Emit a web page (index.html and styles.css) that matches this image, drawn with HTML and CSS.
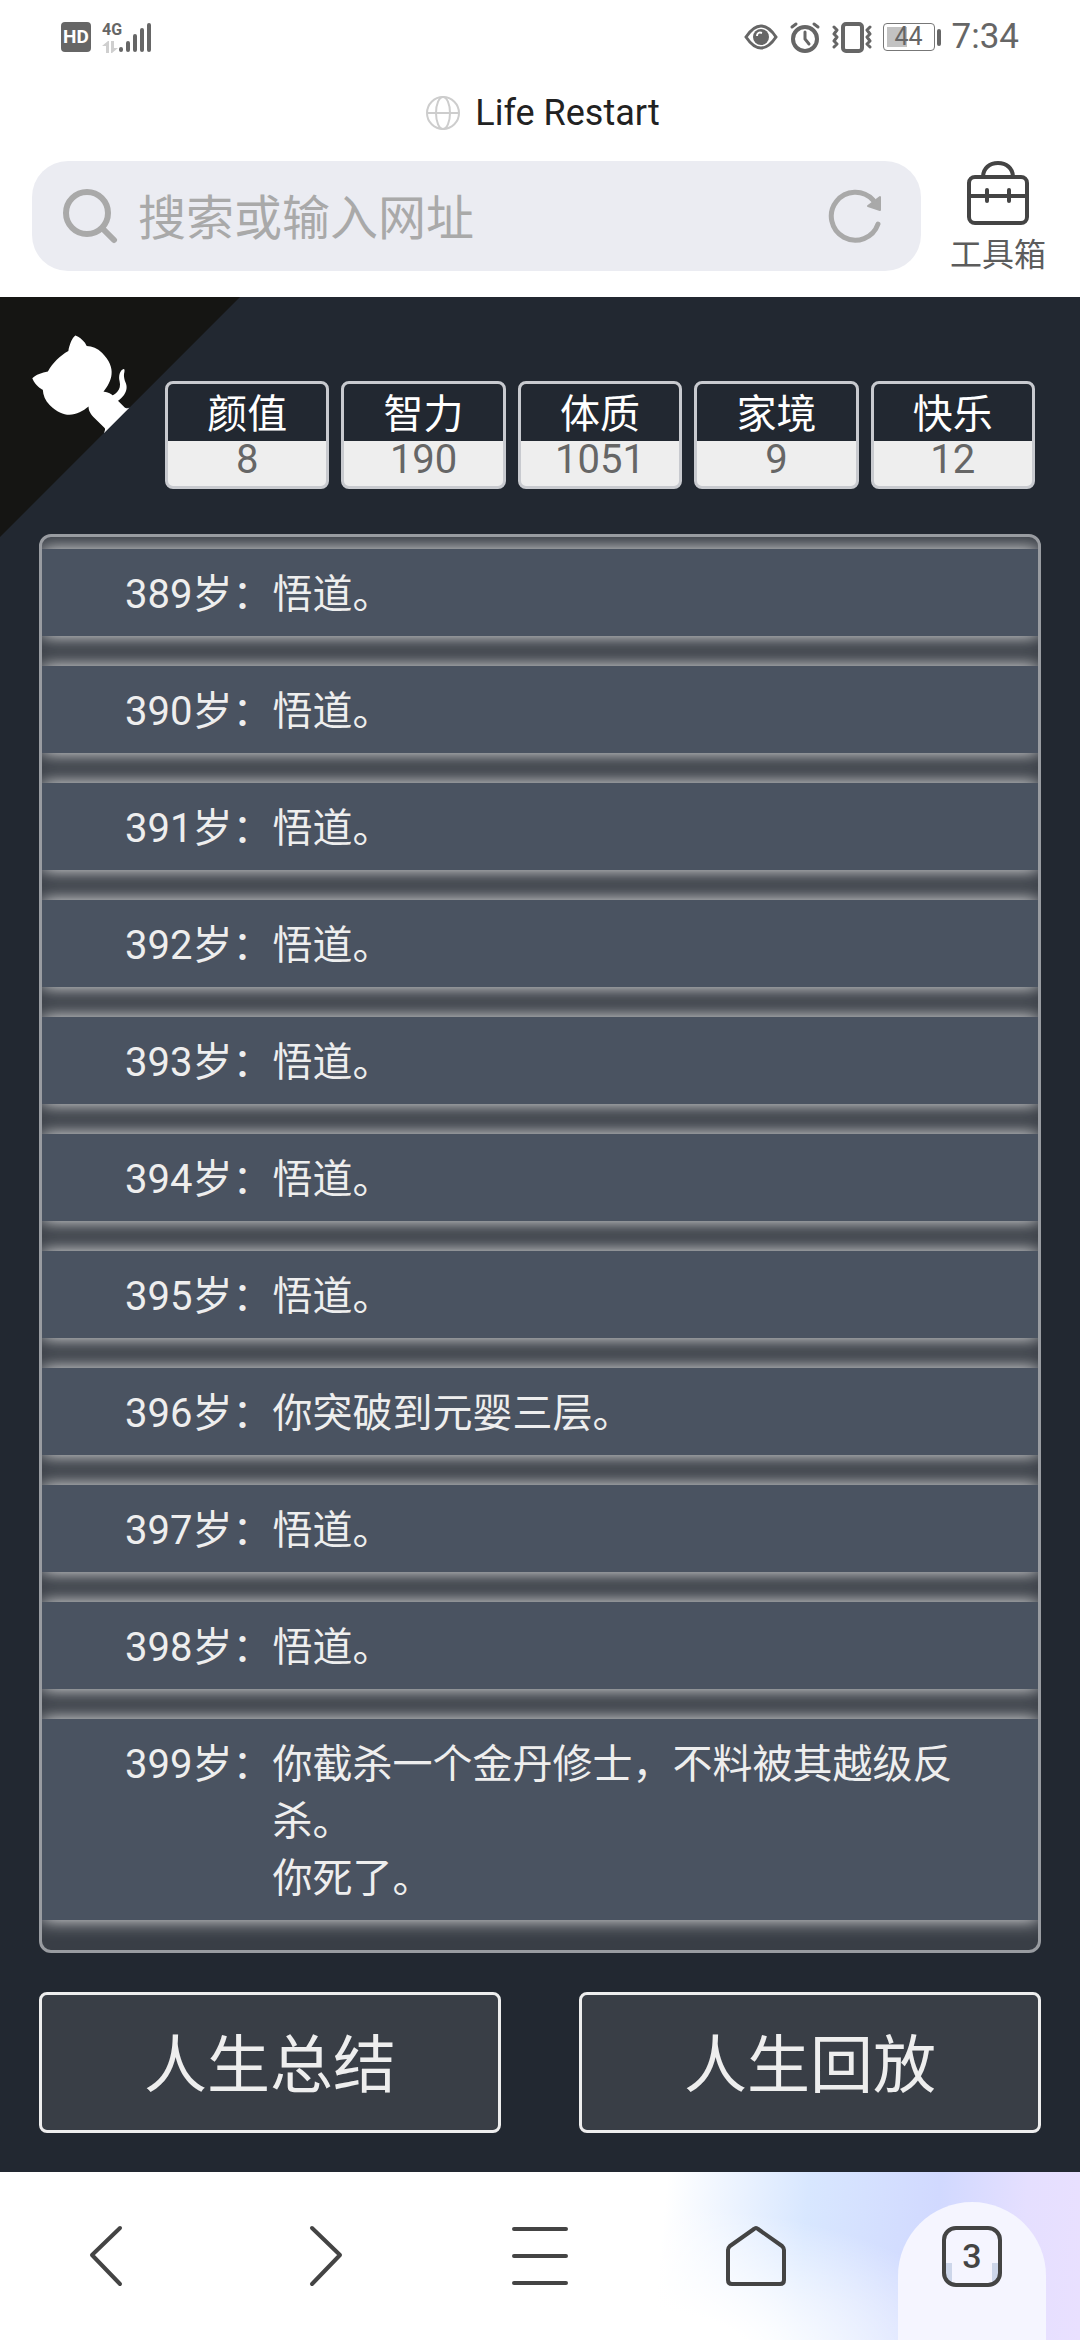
FILE: index.html
```
<!DOCTYPE html>
<html lang="zh-CN">
<head>
  <meta charset="utf-8">
  <meta name="viewport" content="width=device-width, initial-scale=1">
  <title>Life Restart</title>
  <link rel="stylesheet" href="styles.css">
</head>
<body>
  <!-- browser header -->
  <header class="browser-top">
    <div class="status-bar">
      <div class="status-group">
        <span class="hd">HD</span>
        <span class="network">
          <span class="network-type">4G</span>
          <svg width="16" height="12" viewBox="0 0 16 12" fill="#cfcfcf"><path d="M0 5 L6 0 H7 V12 H4 V5Z M9 0 H12 V7 H16 L10 12 H9Z"/></svg>
        </span>
        <svg width="34" height="32" viewBox="0 0 34 32" stroke="#666" stroke-width="4" stroke-linecap="round"><path d="M3 28V29M10 22V29M17 15V29M24 9V29M31 4V29"/></svg>
      </div>
      <div class="status-group status-right">
        <svg width="34" height="32" viewBox="0 0 34 32" fill="none" stroke="#666" stroke-width="3"><path d="M2 16C8 7 13 5 17 5S26 7 32 16C26 25 21 27 17 27S8 25 2 16Z"/><circle cx="17" cy="16" r="8" fill="#666" stroke="none"/><path d="M13 15C13 12 15 11 18 12" stroke="#fff" stroke-width="2"/></svg>
        <svg width="32" height="32" viewBox="0 0 32 32" fill="none" stroke="#666" stroke-width="4" stroke-linecap="round"><circle cx="16" cy="18" r="12"/><path d="M16 11V18L20 23M3 6L7 3M29 6L25 3" stroke-width="3"/></svg>
        <svg width="40" height="32" viewBox="0 0 40 32" fill="none" stroke="#666" stroke-width="3" stroke-linecap="round" stroke-linejoin="round"><rect x="11" y="3" width="19" height="27" rx="3" stroke-width="4"/><path d="M2 6L5 9L2 13L5 16L2 20L5 23L2 26M38 6L35 9L38 13L35 16L38 20L35 23L38 26"/></svg>
        <span class="battery">
          <span class="battery-body"><span class="battery-level">44</span></span>
          <span class="battery-cap"></span>
        </span>
        <span class="clock">7:34</span>
      </div>
    </div>

    <div class="page-title">
      <svg width="34" height="34" viewBox="0 0 34 34" fill="none" stroke="#cdcdcd" stroke-width="2"><circle cx="17" cy="17" r="16"/><ellipse cx="17" cy="17" rx="7" ry="16"/><path d="M1 17H33"/></svg>
      <span>Life Restart</span>
    </div>

    <div class="address-row">
      <form class="search">
        <svg width="56" height="56" viewBox="0 0 56 56" fill="none" stroke="#a9a9a9" stroke-width="6" stroke-linecap="round"><circle cx="25" cy="25" r="21"/><path d="M41 41L52 52"/></svg>
        <input type="text" class="search-input" placeholder="搜索或输入网址" aria-label="搜索或输入网址">
        <button type="button" class="icon-btn" aria-label="刷新">
          <svg width="56" height="56" viewBox="0 0 56 56" fill="none" stroke="#a9a9a9" stroke-width="5" stroke-linecap="round"><path d="M51 36A24 24 0 1 1 46 12"/><path d="M53 9V22L41 18Z" fill="#a9a9a9" stroke-width="2" stroke-linejoin="round"/></svg>
        </button>
      </form>
      <button type="button" class="toolbox">
        <svg width="64" height="64" viewBox="0 0 64 64" fill="none" stroke="#444" stroke-width="4" stroke-linecap="round"><rect x="3" y="16" width="58" height="46" rx="6"/><path d="M17 16C17 7 24 2 32 2S47 7 47 16M3 35H61M21 29V40M43 29V40"/></svg>
        <span>工具箱</span>
      </button>
    </div>
  </header>

  <!-- game -->
  <main class="game">
    <a href="#" class="github-corner" aria-label="View source on GitHub">
      <svg width="240" height="240" viewBox="0 0 250 250">
        <g transform="translate(250 0) scale(-1 1)">
          <path fill="#151513" d="M0,0 L115,115 L130,115 L142,142 L250,250 L250,0 Z"/>
          <path fill="#fff" d="M128.3,109.0 C113.8,99.7 119.0,89.6 119.0,89.6 C122.0,82.7 120.5,78.6 120.5,78.6 C119.2,72.0 123.4,76.3 123.4,76.3 C127.3,80.9 125.5,87.3 125.5,87.3 C122.9,97.6 130.6,101.9 134.4,103.2"/>
          <path fill="#fff" d="M115.0,115.0 C114.9,115.1 118.7,116.5 119.8,115.4 L133.7,101.6 C136.9,99.2 139.9,98.4 142.2,98.6 C133.8,88.0 127.5,74.4 143.8,58.0 C148.5,53.4 154.0,51.2 159.7,51.0 C160.3,49.4 163.2,43.6 171.4,40.1 C171.4,40.1 176.1,42.5 178.8,56.2 C183.1,58.6 187.2,61.8 190.9,65.4 C194.5,69.0 197.7,73.2 200.1,77.6 C213.8,80.2 216.3,84.9 216.3,84.9 C212.7,93.1 206.9,96.0 205.4,96.6 C205.1,102.4 203.0,107.8 198.3,112.5 C181.9,128.9 168.3,122.5 157.7,114.1 C157.9,116.9 156.7,120.9 152.7,124.9 L141.0,136.5 C139.8,137.7 141.6,141.9 141.8,141.8 Z"/>
        </g>
      </svg>
    </a>

    <ul class="property">
      <li><span>颜值</span><span class="value">8</span></li>
      <li><span>智力</span><span class="value">190</span></li>
      <li><span>体质</span><span class="value">1051</span></li>
      <li><span>家境</span><span class="value">9</span></li>
      <li><span>快乐</span><span class="value">12</span></li>
    </ul>

    <ul class="trajectory">
      <li><span>389岁：</span><span>悟道。</span></li>
      <li><span>390岁：</span><span>悟道。</span></li>
      <li><span>391岁：</span><span>悟道。</span></li>
      <li><span>392岁：</span><span>悟道。</span></li>
      <li><span>393岁：</span><span>悟道。</span></li>
      <li><span>394岁：</span><span>悟道。</span></li>
      <li><span>395岁：</span><span>悟道。</span></li>
      <li><span>396岁：</span><span>你突破到元婴三层。</span></li>
      <li><span>397岁：</span><span>悟道。</span></li>
      <li><span>398岁：</span><span>悟道。</span></li>
      <li><span>399岁：</span><span>你截杀一个金丹修士，不料被其越级反杀。<br>你死了。</span></li>
    </ul>

    <div class="btn-area">
      <button type="button" class="mainbtn">人生总结</button>
      <button type="button" class="mainbtn">人生回放</button>
    </div>
  </main>

  <!-- browser toolbar -->
  <nav class="toolbar">
    <button type="button" aria-label="后退"><svg width="64" height="64" viewBox="0 0 64 64"><path d="M44 4L16 31L44 60"/></svg></button>
    <button type="button" aria-label="前进"><svg width="64" height="64" viewBox="0 0 64 64"><path d="M20 4L48 31L20 60"/></svg></button>
    <button type="button" aria-label="菜单"><svg width="64" height="64" viewBox="0 0 64 64"><path d="M6 5H58M6 32H58M6 59H58"/></svg></button>
    <button type="button" aria-label="主页"><svg width="64" height="64" viewBox="0 0 64 64"><path d="M30 5Q32 3 34 5L58 22Q60 24 60 26V56Q60 60 56 60H8Q4 60 4 56V26Q4 24 6 22Z"/></svg></button>
    <button type="button" class="tabs"><span class="tabs-bg"><span class="tabs-count">3</span></span></button>
  </nav>
</body>
</html>
```
FILE: styles.css
```
* {
  box-sizing: border-box;
}

body {
  margin: 0;
  background-color: #fff;
  font-family: Roboto, "Noto Sans CJK SC", sans-serif;
}

ul {
  list-style-type: none;
  margin: 0;
  padding: 0;
}

button {
  margin: 0;
  padding: 0;
  border: none;
  background: none;
  font-family: inherit;
}

svg {
  display: block;
  flex: none;
}

/* browser header */
.browser-top {
  padding: 21px 32px 23px;
}

.status-bar {
  display: flex;
  justify-content: space-between;
  height: 32px;
  padding: 0 29px;
  color: #666;
}

.status-group {
  display: flex;
  align-items: center;
}

.status-right {
  gap: 11px;
}

.hd {
  width: 30px;
  margin-right: 11px;
  border-radius: 4px;
  background-color: #666;
  color: #fff;
  font-size: 19px;
  font-weight: bold;
  line-height: 30px;
  text-align: center;
}

.network {
  display: flex;
  flex-direction: column;
  align-items: flex-start;
  width: 16px;
  gap: 3px;
}

.network-type {
  font-size: 16px;
  font-weight: bold;
  line-height: 16px;
}

.battery {
  display: flex;
  align-items: center;
  gap: 2px;
}

.battery-body {
  width: 52px;
  height: 28px;
  padding: 3px;
  border: 1px solid #777;
  border-radius: 4px;
}

.battery-level {
  display: block;
  background: linear-gradient(to right, #c2c2c2 46%, transparent 46%);
  font-size: 25px;
  line-height: 20px;
  text-align: center;
}

.battery-cap {
  width: 4px;
  height: 17px;
  border-radius: 2px;
  background-color: #666;
}

.clock {
  font-size: 35px;
  line-height: 36px;
}

.page-title {
  display: flex;
  align-items: center;
  justify-content: center;
  gap: 15px;
  margin: 40px 0 28px;
  padding-left: 6px;
  color: #222;
  font-size: 36px;
  line-height: 40px;
}

.address-row {
  display: flex;
  align-items: flex-start;
  gap: 27px;
}

.search {
  display: flex;
  flex: 1;
  align-items: center;
  gap: 20px;
  height: 110px;
  padding: 0 38px 0 30px;
  border-radius: 36px;
  background-color: #ebecf2;
}

.search-input {
  flex: 1;
  min-width: 0;
  padding: 4px 0 0;
  border: none;
  outline: none;
  background: none;
  font-family: inherit;
  font-size: 48px;
}

.search-input::placeholder {
  color: #a9a9a9;
}

.toolbox {
  display: flex;
  flex-direction: column;
  align-items: center;
  gap: 11px;
  width: 100px;
  color: #5c5c5c;
  font-size: 32px;
  line-height: 38px;
}

/* game */
.game {
  position: relative;
  display: flex;
  flex-direction: column;
  padding: 84px 39px 39px;
  background-color: #222831;
}

.github-corner {
  position: absolute;
  top: 0;
  left: 0;
}

.property {
  display: flex;
  gap: 12px;
  margin: 0 6px 45px 126px;
}

.property li {
  flex: 1;
  height: 108px;
  border: 3px solid #c8cacf;
  border-radius: 8px;
  background-color: #eee;
  overflow: hidden;
  text-align: center;
}

.property span {
  display: block;
  height: 57px;
  background-color: #222831;
  color: #fff;
  font-size: 40px;
  line-height: 62px;
}

.property .value {
  height: auto;
  background: none;
  color: #666;
  line-height: 38px;
}

.trajectory {
  padding-top: 12px;
  border: 3px solid #999ca1;
  border-radius: 12px;
  background-color: #393e46;
  overflow: hidden;
  color: #eee;
  font-size: 40px;
  line-height: 57px;
}

.trajectory li {
  display: flex;
  margin-bottom: 30px;
  padding: 17px 60px 13px 83px;
  background-color: #4a5361;
  box-shadow: 0 0 17px #eee;
}

.trajectory li span:first-child {
  flex: none;
}

.btn-area {
  display: flex;
  gap: 78px;
  margin-top: 39px;
}

.mainbtn {
  flex: 1;
  height: 141px;
  padding-bottom: 6px;
  border: 3px solid #eee;
  border-radius: 8px;
  background-color: #393e46;
  color: #eee;
  font-size: 63px;
}

/* browser toolbar */
.toolbar {
  display: grid;
  grid-template-columns: repeat(5, 1fr);
  height: 168px;
  background:
    radial-gradient(ellipse 32% 90% at 60% 110%, #fff 30%, transparent),
    linear-gradient(95deg, #fff 61%, #d8e7ff 74%, #d1d9ff 86%, #e5dfff 94%, #e9e0ff);
}

.toolbar button {
  display: flex;
  align-items: center;
  justify-content: center;
}

.toolbar svg {
  fill: none;
  stroke: #444;
  stroke-width: 4;
  stroke-linecap: round;
  stroke-linejoin: round;
}

.toolbar .tabs {
  align-items: flex-end;
}

.tabs-bg {
  width: 148px;
  height: 138px;
  padding-top: 24px;
  border-radius: 74px 74px 0 0;
  background-color: #f5f5ff;
}

.tabs-count {
  display: block;
  width: 60px;
  margin: 0 auto;
  border: 4px solid #444;
  border-radius: 14px;
  background:
    linear-gradient(#cdd6ea, #cdd6ea) 0 100% / 6px 20px no-repeat,
    linear-gradient(#cdd6ea, #cdd6ea) 100% 100% / 6px 20px no-repeat;
  color: #444;
  font-size: 34px;
  font-weight: 500;
  line-height: 53px;
}
```
